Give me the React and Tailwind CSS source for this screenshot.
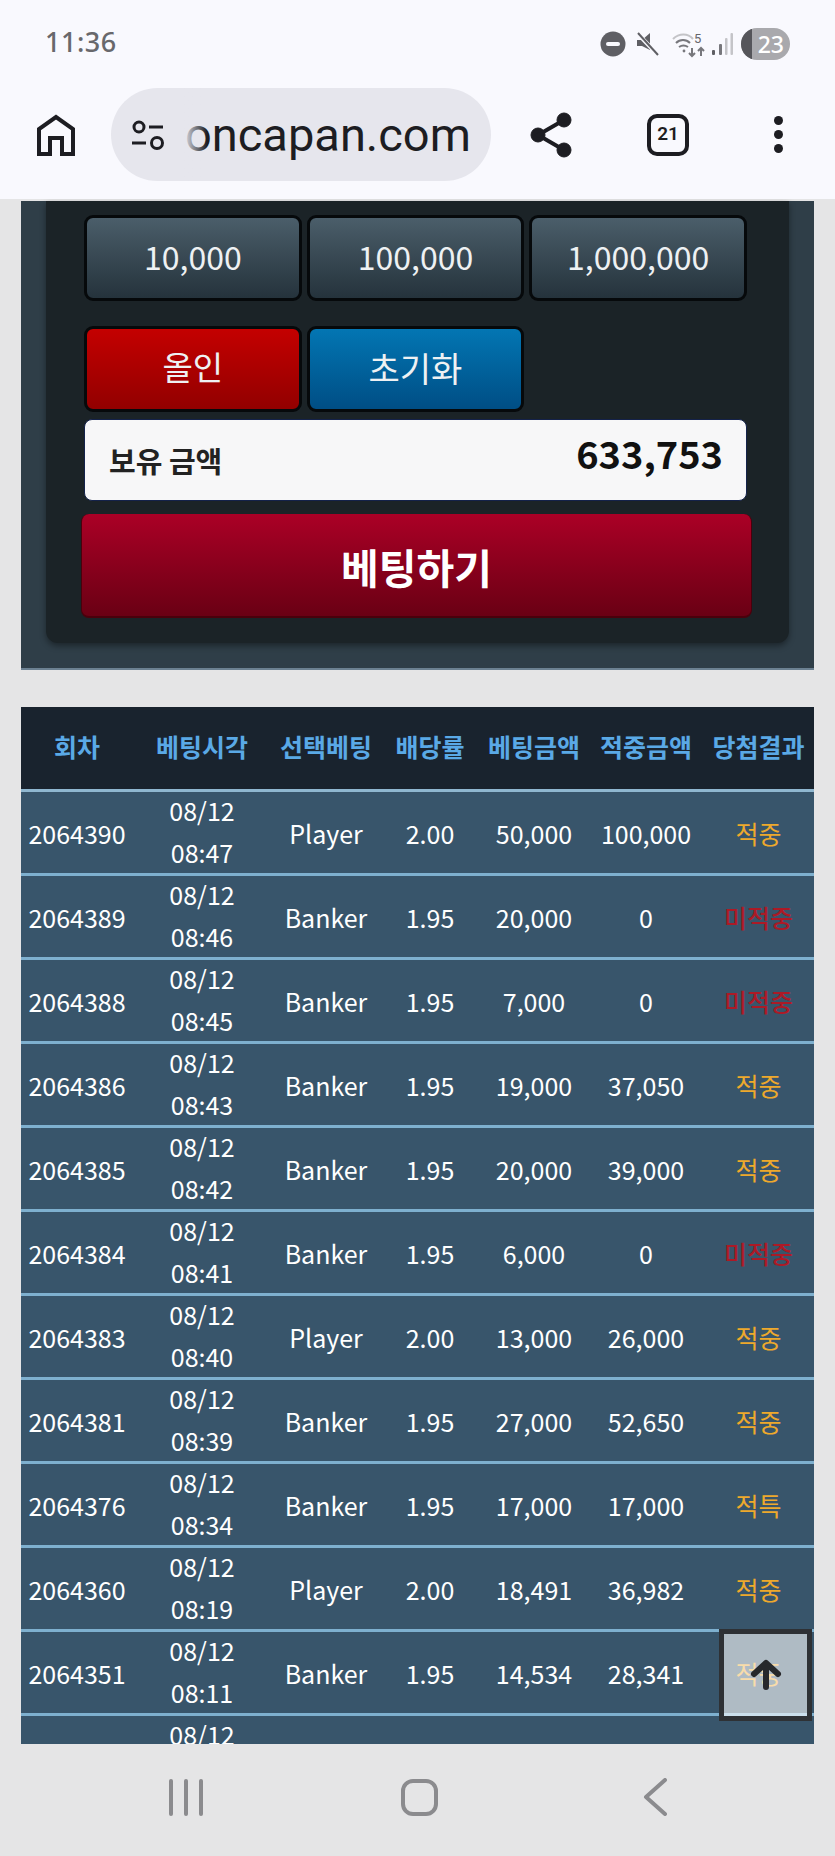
import React from 'react';

const rows = [
  ['2064390', '08:47', 'Player', '2.00', '50,000', '100,000', '적중'],
  ['2064389', '08:46', 'Banker', '1.95', '20,000', '0', '미적중'],
  ['2064388', '08:45', 'Banker', '1.95', '7,000', '0', '미적중'],
  ['2064386', '08:43', 'Banker', '1.95', '19,000', '37,050', '적중'],
  ['2064385', '08:42', 'Banker', '1.95', '20,000', '39,000', '적중'],
  ['2064384', '08:41', 'Banker', '1.95', '6,000', '0', '미적중'],
  ['2064383', '08:40', 'Player', '2.00', '13,000', '26,000', '적중'],
  ['2064381', '08:39', 'Banker', '1.95', '27,000', '52,650', '적중'],
  ['2064376', '08:34', 'Banker', '1.95', '17,000', '17,000', '적특'],
  ['2064360', '08:19', 'Player', '2.00', '18,491', '36,982', '적중'],
  ['2064351', '08:11', 'Banker', '1.95', '14,534', '28,341', '적중'],
  ['', '08:05', '', '', '', '', ''],
];

const headers = ['회차', '베팅시각', '선택베팅', '배당률', '베팅금액', '적중금액', '당첨결과'];
const cols = 'grid grid-cols-[112px_138px_110px_98px_110px_114px_111px]';
const chip = 'h-[86px] rounded-[9px] border-[3px] border-[#06090b] flex items-center justify-center text-[#eef1f3] pb-[4px]';

// status bar icons
const StatusIcons = () => (
  <div className="flex items-center">
    <svg width="26" height="26" viewBox="0 0 26 26"><circle cx="13" cy="13" r="12.5" fill="#5f5f64" /><rect x="6" y="11" width="14" height="4" rx="2" fill="#f9f9fe" /></svg>
    <svg className="ml-[10px]" width="24" height="26" viewBox="0 0 24 26" fill="#5f5f64">
      <path d="M1 9h5l8-7v17L6 15H1z" />
      <path d="M2 3l20 21" stroke="#f9f9fe" strokeWidth="4" />
      <path d="M2 2l20 22" stroke="#5f5f64" strokeWidth="2" />
    </svg>
    <svg className="ml-[12px]" width="34" height="28" viewBox="0 0 34 28" fill="none" stroke="#77777c" strokeWidth="2">
      <path d="M1 9c6-6 15-6 20 0" stroke="#c4c4c8" />
      <path d="M4 13c4-4 10-4 14 0" />
      <path d="M7 17c3-2 6-2 9 0" />
      <circle cx="12" cy="21" r="1.4" fill="#77777c" stroke="none" />
      <path d="M20 18v8m-3-3l3 3 3-3M29 26v-8m-3 3l3-3 3 3" />
      <text x="22" y="13" fontSize="13" fill="#66666b" stroke="none" fontFamily="Roboto, sans-serif">5</text>
    </svg>
    <svg className="ml-[5px]" width="22" height="24" viewBox="0 0 22 24">
      <rect x="1" y="18" width="3" height="5" rx="1" fill="#5f5f64" />
      <rect x="8" y="12" width="3" height="11" rx="1" fill="#77777c" />
      <rect x="14" y="6" width="2.5" height="17" rx="1" fill="#c4c4c8" />
      <rect x="19.5" y="1" width="2.5" height="22" rx="1" fill="#c4c4c8" />
    </svg>
    <div className="relative ml-[8px] w-[49px] h-[32px] rounded-full overflow-hidden bg-[#a9a9ad] flex items-center justify-end pr-[6px] text-white text-[23px] font-['Noto_Sans',sans-serif] font-medium">
      <div className="absolute left-0 top-0 bottom-0 w-[11px] bg-[#55555a]" />
      23
    </div>
  </div>
);

const BrowserBar = () => (
  <div className="h-[199px] bg-[#f9f9fe] shrink-0">
    <div className="h-[88px] pl-[45px] pr-[45px] flex items-center justify-between">
      <span className="text-[27px] font-medium text-[#68686c] tracking-[0.5px] font-['Noto_Sans',sans-serif] mb-[4px]">11:36</span>
      <StatusIcons />
    </div>
    <div className="flex items-center h-[93px]">
      <svg className="ml-[37px]" width="38" height="42" viewBox="0 0 38 42" fill="none" stroke="#1d1d22" strokeWidth="4">
        <path d="M2 40V15L19 3l17 12v25H25V24H13v16z" />
      </svg>
      <div className="relative ml-[36px] w-[380px] h-[93px] rounded-full bg-[#e6e6ed] flex items-center overflow-hidden">
        <svg className="ml-[20px] shrink-0" width="34" height="30" viewBox="0 0 34 30" fill="none" stroke="#1d1d22" strokeWidth="3">
          <circle cx="8" cy="7" r="5" />
          <path d="M18 7h14M1 23h14" />
          <circle cx="26" cy="23" r="5.5" />
        </svg>
        <span className="ml-[20px] text-[47px] text-[#1d1d22] font-['Roboto',sans-serif] leading-none">oncapan.com</span>
        <div className="absolute left-[72px] top-0 bottom-0 w-[24px] bg-gradient-to-r from-[#e6e6ed] to-transparent" />
      </div>
      <svg className="ml-[39px]" width="42" height="46" viewBox="0 0 42 46" fill="#1d1d22" stroke="#1d1d22">
        <circle cx="34" cy="8" r="7" />
        <circle cx="8" cy="23" r="7" />
        <circle cx="34" cy="38" r="7" />
        <path d="M34 8L8 23l26 15" fill="none" strokeWidth="4" />
      </svg>
      <div className="ml-[75px] w-[42px] h-[42px] rounded-[10px] border-4 border-[#1d1d22] flex items-center justify-center text-[19px] font-semibold text-[#1d1d22] font-['Roboto',sans-serif]">21</div>
      <div className="ml-[85px] flex flex-col gap-[5px]">
        <div className="w-[9px] h-[9px] rounded-full bg-[#1d1d22]" />
        <div className="w-[9px] h-[9px] rounded-full bg-[#1d1d22]" />
        <div className="w-[9px] h-[9px] rounded-full bg-[#1d1d22]" />
      </div>
    </div>
  </div>
);

const BetPanel = () => (
  <div className="mx-[21px] bg-[#2f3e48] border-b-2 border-[#6c8192] px-[25px] pb-[25px]">
    <div className="bg-[#1b2327] rounded-b-xl shadow-[0_3px_6px_rgba(0,0,0,0.4)] pl-[39px] pr-[43px] pt-[14px] pb-[25px]">
      <div className="-mx-px grid grid-cols-3 gap-x-[5px] gap-y-[25px] text-[32px]">
        {['10,000', '100,000', '1,000,000'].map((v) => (
          <button key={v} className={`${chip} bg-gradient-to-b from-[#4b5e6a] to-[#25333c]`}>{v}</button>
        ))}
        <button className={`${chip} bg-gradient-to-b from-[#c40000] to-[#920000] text-[33px]`}>올인</button>
        <button className={`${chip} bg-gradient-to-b from-[#0376b3] to-[#004e85] text-[34px]`}>초기화</button>
      </div>
      <div className="-mx-px mt-[7px] h-[82px] rounded-lg bg-[#f7f7f8] border border-[#14224a] flex items-center justify-between pl-[24px] pr-[23px] text-[#111]">
        <span className="text-[29px] font-bold text-[#222] mt-[2px]">보유 금액</span>
        <span className="text-[38px] font-bold mb-[16px]">633,753</span>
      </div>
      <button className="mt-[13px] -ml-[4px] w-[671px] h-[104px] rounded-lg bg-gradient-to-b from-[#ab0026] to-[#6a0014] border-b-2 border-x border-[#4a000c] text-white text-[41px] font-bold flex items-center justify-center pt-[3px]">베팅하기</button>
    </div>
  </div>
);

const BetTable = () => (
  <div className="mx-[21px] mt-[37px] text-white text-[25px]">
    <div className={`${cols} h-[85px] items-center text-center bg-[#19232e] border-b-[3px] border-[#8fb7d0] text-[#5aa9e6] font-bold pb-[2px]`}>
      {headers.map((h) => <div key={h} className="whitespace-nowrap">{h}</div>)}
    </div>
    {rows.map((r, i) => (
      <div key={i} className={`${cols} h-[84px] items-center text-center bg-[#38556b] border-b-[3px] border-[#7eb0cf] leading-[42px]`}>
        <div>{r[0]}</div>
        <div className="-mt-[4px]">08/12<br />{r[1]}</div>
        <div>{r[2]}</div>
        <div>{r[3]}</div>
        <div>{r[4]}</div>
        <div>{r[5]}</div>
        <div className={r[6] === '미적중' ? 'text-[#ac1a26] font-medium' : 'text-[#eea92c]'}>{r[6]}</div>
      </div>
    ))}
  </div>
);

export default function App() {
  return (
    <div className="w-[835px] h-[1856px] flex flex-col overflow-hidden bg-[#e5e5e6] font-['Noto_Sans_CJK_KR','Noto_Sans',sans-serif]">
      <BrowserBar />
      <main className="relative flex-1 min-h-0 overflow-hidden pt-[2px]">
        <BetPanel />
        <BetTable />
        <button className="absolute right-[23px] bottom-[23px] w-[93px] h-[92px] border-[5px] border-[#2e3135] bg-white/60 flex items-center justify-center">
          <svg width="32" height="32" viewBox="0 0 32 32" fill="none" stroke="#26282b" strokeWidth="6" strokeLinecap="round" strokeLinejoin="round">
            <path d="M16 28V5M4 15L16 4l12 11" />
          </svg>
        </button>
      </main>
      <nav className="h-[112px] shrink-0 flex items-center pl-[169px] pb-[6px]">
        <div className="w-[34px] h-[37px] flex justify-between">
          <div className="w-[4px] bg-[#8b8b8e] rounded-full" />
          <div className="w-[4px] bg-[#8b8b8e] rounded-full" />
          <div className="w-[4px] bg-[#8b8b8e] rounded-full" />
        </div>
        <div className="ml-[198px] w-[37px] h-[37px] rounded-[12px] border-4 border-[#8b8b8e]" />
        <svg className="ml-[205px]" width="24" height="38" viewBox="0 0 24 38" fill="none" stroke="#8b8b8e" strokeWidth="4" strokeLinecap="round" strokeLinejoin="round">
          <path d="M22 2L3 19l19 17" />
        </svg>
      </nav>
    </div>
  );
}
